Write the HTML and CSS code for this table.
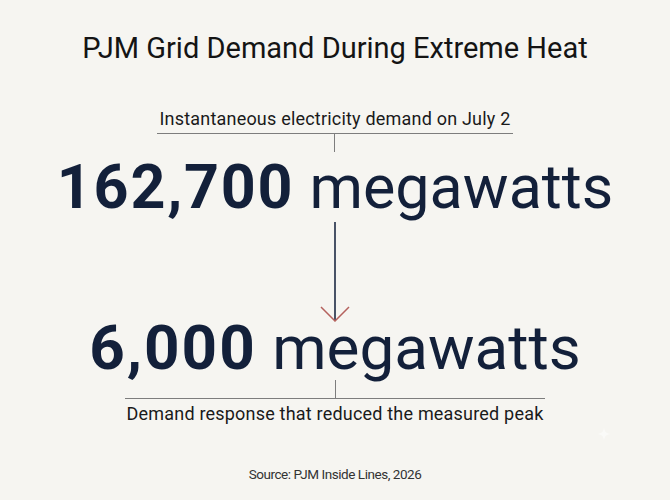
FILE: index.html
```html
<!DOCTYPE html>
<html lang="en">
<head>
<meta charset="utf-8">
<title>PJM Grid Demand During Extreme Heat</title>
<link rel="stylesheet" href="styles.css">
</head>
<body>
<main class="page">
  <h1 class="title">PJM Grid Demand During Extreme Heat</h1>
  <div class="label-top">
    <span class="label">Instantaneous electricity demand on July 2</span>
    <span class="tick"></span>
  </div>
  <div class="figure"><b>162,700</b> megawatts</div>
  <div class="arrow">
    <svg width="30" height="100" viewBox="0 0 30 100">
      <line x1="15" y1="0" x2="15" y2="99" stroke="#1d2a44" stroke-width="1.6"/>
      <polyline points="1,85 15,99 29,85" fill="none" stroke="#b5625e" stroke-width="1.5"/>
    </svg>
  </div>
  <div class="figure figure-2"><b>6,000</b> megawatts</div>
  <div class="label-bottom">
    <span class="tick"></span>
    <span class="label">Demand response that reduced the measured peak</span>
  </div>
  <p class="source">Source: PJM Inside Lines, 2026</p>
</main>
<svg class="sparkle" width="14" height="14" viewBox="0 0 14 14"><path d="M7 0 C7.6 5 9 6.4 14 7 C9 7.6 7.6 9 7 14 C6.4 9 5 7.6 0 7 C5 6.4 6.4 5 7 0Z" fill="#ffffff"/></svg>
</body>
</html>
```
FILE: styles.css
```css
html, body {
  margin: 0;
  padding: 0;
}
body {
  background: #f6f5f1;
  width: 670px;
  height: 500px;
  overflow: hidden;
  position: relative;
  font-family: Roboto, "Liberation Sans", sans-serif;
  color: #111a2c;
}
.page {
  display: flex;
  flex-direction: column;
  align-items: center;
}
.title {
  margin: 31px 0 0;
  font-size: 29px;
  font-weight: 400;
  line-height: 34px;
  color: #141414;
}
.label-top, .label-bottom {
  display: flex;
  flex-direction: column;
  align-items: center;
}
.label-top {
  margin-top: 43px;
}
.label {
  font-size: 18px;
  line-height: 22px;
  letter-spacing: 0.2px;
  color: #1a1a1a;
}
.label-top .label {
  padding: 0 2px 3px;
  border-bottom: 1px solid #7d7d7d;
}
.label-bottom {
  margin-top: 7px;
}
.label-bottom .label {
  padding: 4px 2px 0;
  border-top: 1px solid #7d7d7d;
}
.tick {
  width: 1px;
  height: 18px;
  background: #7d7d7d;
}
.figure {
  font-size: 61px;
  line-height: 70px;
  color: #13203a;
  white-space: nowrap;
}
.figure b {
  font-weight: 700;
  letter-spacing: 1.8px;
}
.figure-2 {
  font-size: 62px;
  line-height: 50px;
}
.figure-2 b {
  letter-spacing: 2px;
}
.arrow {
  height: 101px;
  display: flex;
}
.source {
  margin: 41px 0 0;
  font-size: 13.5px;
  line-height: 16px;
  letter-spacing: -0.45px;
  color: #333;
}
.sparkle {
  position: absolute;
  left: 597px;
  top: 427px;
  opacity: 0.5;
}
```
